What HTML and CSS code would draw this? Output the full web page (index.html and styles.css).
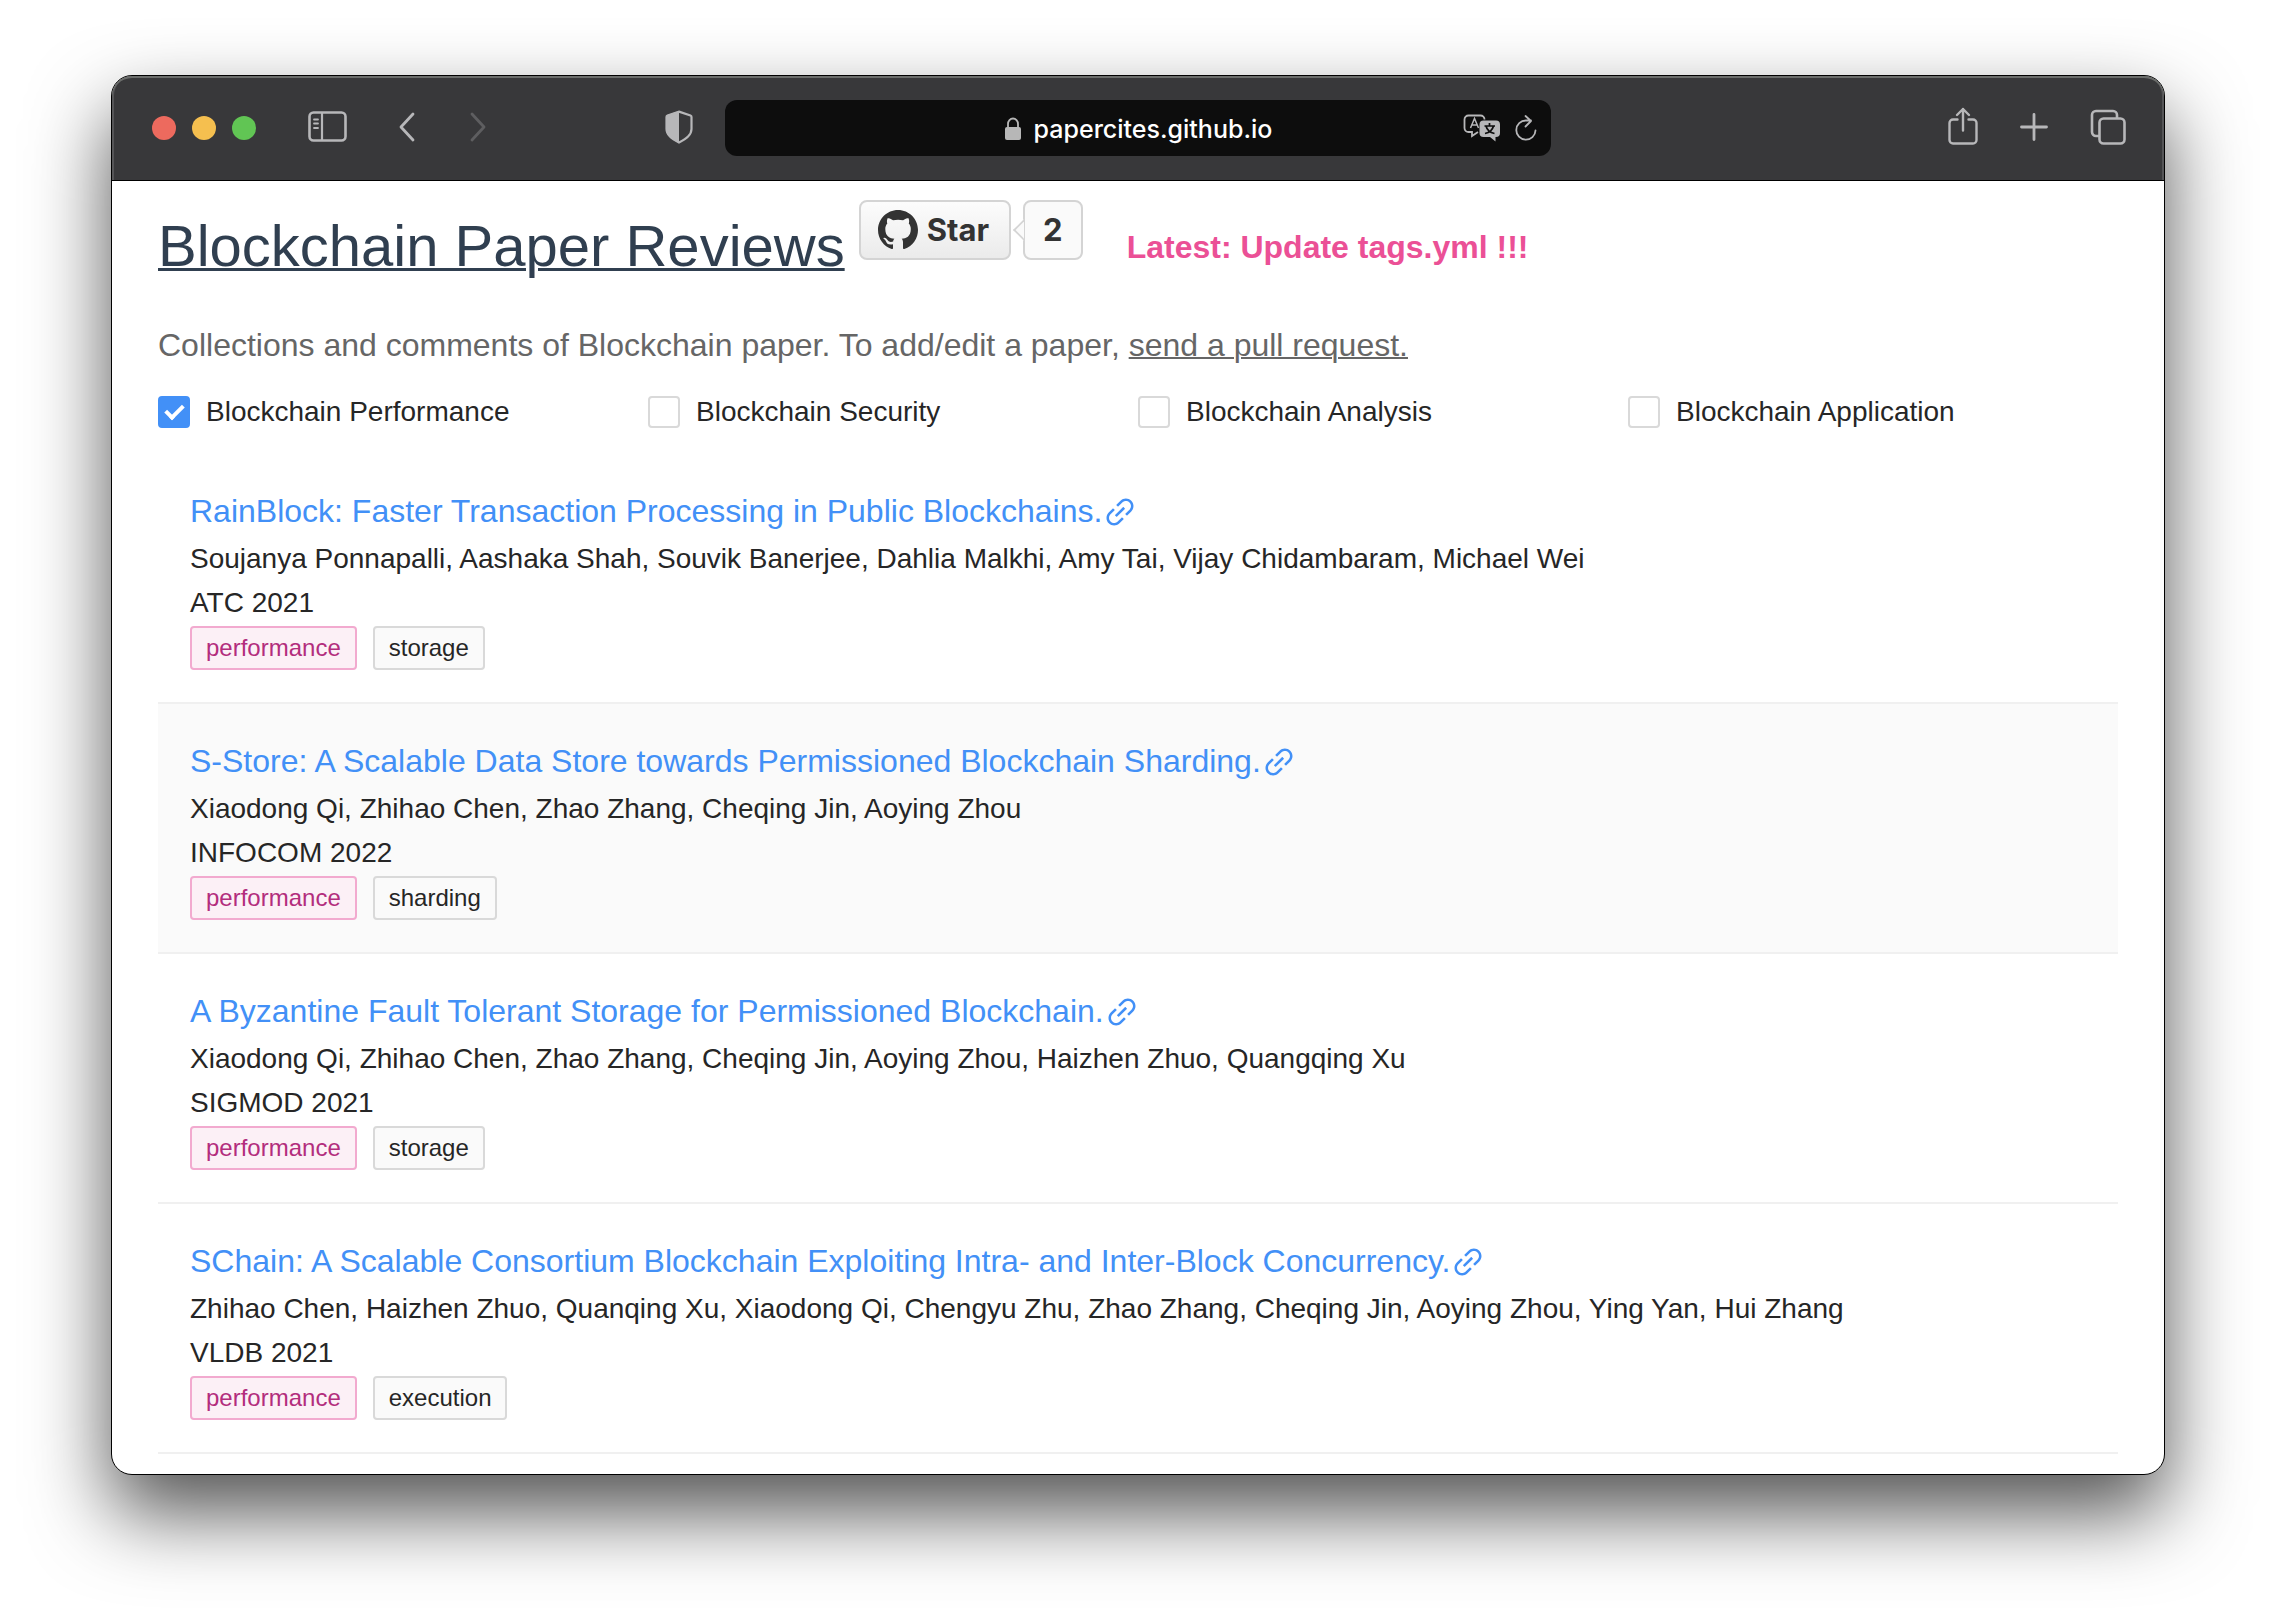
FILE: index.html
```html
<!DOCTYPE html>
<html lang="en">
<head>
<meta charset="utf-8">
<title>Blockchain Paper Reviews</title>
<link rel="stylesheet" href="styles.css">
</head>
<body>
<svg class="sprite" aria-hidden="true">
  <symbol id="link" viewBox="0 0 1024 1024"><path fill="currentColor" d="M574 665.4a8.03 8.03 0 00-11.3 0L446.5 781.6c-53.8 53.8-144.6 59.5-204 0-59.5-59.5-53.8-150.2 0-204l116.2-116.2c3.1-3.1 3.1-8.2 0-11.3l-39.8-39.8a8.03 8.03 0 00-11.3 0L191.4 526.5c-84.6 84.6-84.6 221.5 0 306s221.5 84.6 306 0l116.2-116.2c3.1-3.1 3.1-8.2 0-11.3L574 665.4zm258.6-474c-84.6-84.6-221.5-84.6-306 0L410.3 307.6a8.03 8.03 0 000 11.3l39.7 39.7c3.1 3.1 8.2 3.1 11.3 0l116.2-116.2c53.8-53.8 144.6-59.5 204 0 59.5 59.5 53.8 150.2 0 204L665.3 562.6a8.03 8.03 0 000 11.3l39.8 39.8c3.1 3.1 8.2 3.1 11.3 0l116.2-116.2c84.5-84.6 84.5-221.5 0-306.1zM610.1 372.3a8.03 8.03 0 00-11.3 0L372.3 598.7a8.03 8.03 0 000 11.3l39.6 39.6c3.1 3.1 8.2 3.1 11.3 0l226.4-226.4c3.1-3.1 3.1-8.2 0-11.3l-39.5-39.6z"/></symbol>
</svg>
<div class="window">
  <header class="toolbar">
    <div class="toolbar-side">
      <div class="lights"><span class="light close"></span><span class="light minimize"></span><span class="light maximize"></span></div>
      <button class="tool sidebar-tool" aria-label="Sidebar"><svg width="40" height="32" viewBox="0 0 40 32" fill="none" stroke="currentColor"><rect x="1.5" y="1.5" width="36" height="28" rx="4" stroke-width="2.6"/><path d="M14 2v27" stroke-width="2.2"/><path d="M6 8.500h4M6 12.500h4M6 17h4" stroke-width="1.800" stroke-linecap="round"/></svg></button>
      <button class="tool back-tool" aria-label="Back"><svg width="18" height="32" viewBox="0 0 18 32" fill="none" stroke="currentColor" stroke-width="2.800" stroke-linecap="round" stroke-linejoin="round"><path d="M15 3L3 16l12 13"/></svg></button>
      <button class="tool forward-tool" aria-label="Forward" disabled><svg width="18" height="32" viewBox="0 0 18 32" fill="none" stroke="currentColor" stroke-width="2.800" stroke-linecap="round" stroke-linejoin="round"><path d="M3 3l12 13L3 29"/></svg></button>
      <button class="tool shield-tool" aria-label="Privacy report"><svg width="28" height="34" viewBox="0 0 28 34"><path d="M14 1.600L25.500 5.500a1.500 1.500 0 011 1.500v12c0 6-5 9.500-12.500 13.400C6.500 28.500 1.500 25 1.500 19V7a1.500 1.500 0 011-1.500z" fill="none" stroke="currentColor" stroke-width="2.200"/><path d="M14 1v32C6 29 1 25 1 19V7a2 2 0 011.500-2z" fill="currentColor"/></svg></button>
    </div>
    <div class="address">
      <span></span>
      <span class="site"><svg width="18" height="24" viewBox="0 0 18 24"><rect x="1" y="10" width="16" height="13" rx="2" fill="currentColor"/><path d="M4 11V7a5 5.500 0 0110 0v4" fill="none" stroke="currentColor" stroke-width="1.800"/></svg><span class="host">papercites.github.io</span></span>
      <span class="address-tools">
        <button class="tool" aria-label="Translate"><svg width="38" height="28" viewBox="0 0 38 28"><path d="M15 18l-6 4v-4H5.500a4 4 0 01-4-4V5.500a4 4 0 014-4h12a4 4 0 014 4" fill="none" stroke="currentColor" stroke-width="1.800"/><path d="M7.500 14L11.500 4.500l4 9.500M9 11h5" fill="none" stroke="currentColor" stroke-width="1.500"/><path d="M20.500 6.500h12.500a4 4 0 014 4v8.500a4 4 0 01-4 4h-.5v4.500l-5.500-4.500h-6.500a4 4 0 01-4-4v-8.500a4 4 0 014-4z" fill="currentColor"/><path d="M26.500 9v3M21.500 12h10.500M23 12c1 4 4 6.500 8.500 7.500M30.500 12c-1 4-4 6.500-8.500 7.500" fill="none" stroke="#0d0d0d" stroke-width="1.700"/></svg></button>
        <button class="tool" aria-label="Reload"><svg width="22" height="28" viewBox="0 0 22 28" fill="none" stroke="currentColor" stroke-width="1.800" stroke-linecap="round" stroke-linejoin="round"><path d="M20.500 16.500A9.600 9.600 0 1111 6.500h5M10.500 2l5.500 5-5.500 5.500"/></svg></button>
      </span>
    </div>
    <div class="toolbar-side toolbar-end">
      <button class="tool" aria-label="Share"><svg width="30" height="40" viewBox="0 0 30 40" fill="none" stroke="currentColor" stroke-width="2.400" stroke-linecap="round" stroke-linejoin="round"><path d="M9.500 12.500H5A3.500 3.500 0 001.500 16v17A3.500 3.500 0 005 36.500h20a3.500 3.500 0 003.500-3.500V16a3.500 3.500 0 00-3.500-3.500h-4.500M15 23.500V2M9 8l6-6 6 6"/></svg></button>
      <button class="tool" aria-label="New tab"><svg width="28" height="28" viewBox="0 0 28 28" fill="none" stroke="currentColor" stroke-width="2.800" stroke-linecap="round"><path d="M14 1.500v25M1.500 14h25"/></svg></button>
      <button class="tool" aria-label="Show tabs"><svg width="36" height="36" viewBox="0 0 36 36" fill="none" stroke="currentColor" stroke-width="2.600"><rect x="9.500" y="9.500" width="25" height="25" rx="4"/><path d="M9 27H6a4 4 0 01-4-4V6a4 4 0 014-4h17a4 4 0 014 4v3"/></svg></button>
    </div>
  </header>
  <main class="page">
    <div class="heading">
      <h1 class="title"><a href="#">Blockchain Paper Reviews</a></h1>
      <div class="github">
        <a class="star" href="#"><svg width="40" height="40" viewBox="0 0 16 16"><path fill="currentColor" d="M8 0C3.580 0 0 3.580 0 8c0 3.540 2.290 6.530 5.470 7.590.4.070.55-.17.55-.38 0-.19-.01-.82-.01-1.490-2.010.37-2.530-.49-2.690-.94-.09-.23-.48-.94-.82-1.130-.28-.15-.68-.52-.01-.53.63-.01 1.080.58 1.230.82.72 1.210 1.870.87 2.330.66.07-.52.28-.87.51-1.070-1.780-.2-3.640-.89-3.640-3.950 0-.87.31-1.590.82-2.150-.08-.2-.36-1.020.08-2.120 0 0 .67-.21 2.200.82.64-.18 1.320-.27 2-.27s1.360.09 2 .27c1.530-1.040 2.200-.82 2.200-.82.44 1.100.16 1.920.08 2.120.51.56.82 1.270.82 2.150 0 3.070-1.870 3.750-3.650 3.950.29.25.54.73.54 1.480 0 1.070-.01 1.930-.01 2.200 0 .21.15.46.55.38A8.010 8.010 0 0016 8c0-4.420-3.580-8-8-8z"/></svg>Star</a>
        <a class="count" href="#">2</a>
      </div>
      <strong class="latest">Latest: Update tags.yml !!!</strong>
    </div>
    <p class="intro">Collections and comments of Blockchain paper. To add/edit a paper, <a href="#">send a pull request.</a></p>
    <div class="filters">
      <label class="filter"><input type="checkbox" checked>Blockchain Performance</label>
      <label class="filter"><input type="checkbox">Blockchain Security</label>
      <label class="filter"><input type="checkbox">Blockchain Analysis</label>
      <label class="filter"><input type="checkbox">Blockchain Application</label>
    </div>
    <ul class="papers">
      <li class="paper">
        <a class="paper-title" href="#">RainBlock: Faster Transaction Processing in Public Blockchains.<svg class="link-icon"><use href="#link"/></svg></a>
        <p>Soujanya Ponnapalli, Aashaka Shah, Souvik Banerjee, Dahlia Malkhi, Amy Tai, Vijay Chidambaram, Michael Wei</p>
        <p>ATC 2021</p>
        <div class="tags"><span class="tag topic">performance</span><span class="tag">storage</span></div>
      </li>
      <li class="paper shaded">
        <a class="paper-title" href="#">S-Store: A Scalable Data Store towards Permissioned Blockchain Sharding.<svg class="link-icon"><use href="#link"/></svg></a>
        <p>Xiaodong Qi, Zhihao Chen, Zhao Zhang, Cheqing Jin, Aoying Zhou</p>
        <p>INFOCOM 2022</p>
        <div class="tags"><span class="tag topic">performance</span><span class="tag">sharding</span></div>
      </li>
      <li class="paper">
        <a class="paper-title" href="#">A Byzantine Fault Tolerant Storage for Permissioned Blockchain.<svg class="link-icon"><use href="#link"/></svg></a>
        <p>Xiaodong Qi, Zhihao Chen, Zhao Zhang, Cheqing Jin, Aoying Zhou, Haizhen Zhuo, Quangqing Xu</p>
        <p>SIGMOD 2021</p>
        <div class="tags"><span class="tag topic">performance</span><span class="tag">storage</span></div>
      </li>
      <li class="paper">
        <a class="paper-title" href="#">SChain: A Scalable Consortium Blockchain Exploiting Intra- and Inter-Block Concurrency.<svg class="link-icon"><use href="#link"/></svg></a>
        <p>Zhihao Chen, Haizhen Zhuo, Quanqing Xu, Xiaodong Qi, Chengyu Zhu, Zhao Zhang, Cheqing Jin, Aoying Zhou, Ying Yan, Hui Zhang</p>
        <p>VLDB 2021</p>
        <div class="tags"><span class="tag topic">performance</span><span class="tag">execution</span></div>
      </li>
    </ul>
  </main>
</div>
</body>
</html>
```
FILE: styles.css
```css
*, *::before { box-sizing: border-box; }

body {
  margin: 0;
  padding: 75px 111px 147px;
  background: #fff;
  color: #262626;
  font: 28px/44px "Liberation Sans", Arial, sans-serif;
}

h1, p, ul { margin: 0; padding: 0; font-weight: 400; }
svg { display: block; flex: none; }
.sprite { position: absolute; width: 0; height: 0; }

.window {
  border: 1px solid #000;
  border-radius: 21px;
  background: #fff;
  box-shadow: 0 38px 80px rgba(0, 0, 0, 0.68);
}

/* Browser toolbar */
.toolbar {
  display: grid;
  grid-template-columns: 1fr minmax(0, 826px) 1fr;
  align-items: center;
  height: 105px;
  border-bottom: 1px solid #000;
  border-radius: 20px 20px 0 0;
  background: #38383a;
  box-shadow: inset 0 2px 0 #6b6d6b, inset 2px 0 0 #555557, inset -2px 0 0 #555557;
}

.toolbar-side { display: flex; align-items: center; padding: 0 38px 2px 40px; }
.toolbar-end { justify-content: flex-end; gap: 42px; }
.lights { display: flex; gap: 16px; padding-top: 2px; }
.light { width: 24px; height: 24px; border-radius: 50%; }
.close { background: #ed6a5e; }
.minimize { background: #f5bf4f; }
.maximize { background: #61c554; }

.tool { padding: 0; border: 0; background: none; color: #b7b7b9; }
.sidebar-tool { margin-left: 52px; }
.back-tool { margin-left: 50px; }
.forward-tool { margin-left: 53px; }
.forward-tool:disabled { color: #5e5e60; }
.shield-tool { margin-left: auto; margin-right: -6px; }

.address {
  display: grid;
  grid-template-columns: 1fr auto 1fr;
  align-items: center;
  height: 56px;
  padding: 0 14px;
  border-radius: 12px;
  background: #0d0d0d;
  color: #b7b7b7;
}
.site { display: flex; align-items: center; gap: 12px; padding-top: 2px; }
.host { color: #fff; font: 500 25px/32px Inter, sans-serif; }
.address-tools { display: flex; justify-content: flex-end; gap: 14px; }

/* Page heading */
.page { padding: 19px 46px 20px; }
.heading { display: flex; align-items: flex-start; }
.title { font-size: 58px; line-height: 92px; }
.title a { color: #303f50; text-decoration-thickness: 3px; }
.github { display: flex; gap: 12px; margin-left: 14px; }
.star, .count {
  display: flex;
  align-items: center;
  height: 60px;
  padding: 0 18px;
  border: 2px solid #d4d4d4;
  border-radius: 8px;
  background: #fafafa;
  color: #333;
  font: 700 31px/56px Inter, sans-serif;
  text-decoration: none;
}
.star { gap: 9px; padding: 0 20px 0 17px; background: linear-gradient(#fcfcfc, #ebebeb); }
.count { position: relative; }
.count::before {
  content: "";
  position: absolute;
  left: -9px;
  top: 20px;
  width: 16px;
  height: 16px;
  border: solid #d4d4d4;
  border-width: 0 0 2px 2px;
  background: #fafafa;
  clip-path: polygon(0 0, 100% 100%, 0 100%);
  transform: rotate(45deg);
}
.latest { margin-left: 44px; color: #eb5096; font-size: 32px; line-height: 94px; }

.intro { margin-top: 26px; color: #666; font-size: 32px; line-height: 50px; }
.intro a { color: inherit; text-decoration-thickness: 2px; }

/* Topic filters */
.filters { display: grid; grid-template-columns: repeat(4, 1fr); margin-top: 20px; }
.filter { display: flex; align-items: center; gap: 16px; }
.filter input {
  appearance: none;
  display: grid;
  place-items: center;
  width: 32px;
  height: 32px;
  margin: 0;
  border: 2px solid #d9d9d9;
  border-radius: 4px;
  background: #fff;
}
.filter input:checked { border-color: #4290f7; background: #4290f7; }
.filter input:checked::before {
  content: "";
  width: 11px;
  height: 18px;
  margin-bottom: 4px;
  border: solid #fff;
  border-width: 0 4px 4px 0;
  transform: rotate(45deg);
}

/* Paper list */
.papers { margin-top: 20px; list-style: none; }
.paper { padding: 32px; border-bottom: 2px solid #f0f0f0; }
.shaded { background: #fafafa; }
.paper-title {
  display: flex;
  align-items: center;
  color: #4290f7;
  font-size: 32px;
  line-height: 51px;
  text-decoration: none;
}
.link-icon { width: 36px; height: 36px; }
.tags { display: flex; gap: 16px; margin-top: 1px; }
.tag {
  padding: 0 14px;
  border: 2px solid #d9d9d9;
  border-radius: 4px;
  background: #fafafa;
  font-size: 24px;
  line-height: 40px;
}
.topic { border-color: #f2aacf; background: #fcf0f6; color: #b32d7d; }
```
